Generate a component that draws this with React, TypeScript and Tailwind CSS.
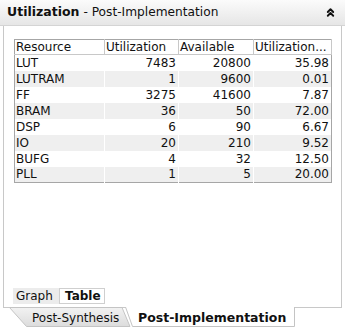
import { ChevronsUp } from 'lucide-react';

const rows = [
  { name: 'LUT', used: '7483', avail: '20800', pct: '35.98' },
  { name: 'LUTRAM', used: '1', avail: '9600', pct: '0.01' },
  { name: 'FF', used: '3275', avail: '41600', pct: '7.87' },
  { name: 'BRAM', used: '36', avail: '50', pct: '72.00' },
  { name: 'DSP', used: '6', avail: '90', pct: '6.67' },
  { name: 'IO', used: '20', avail: '210', pct: '9.52' },
  { name: 'BUFG', used: '4', avail: '32', pct: '12.50' },
  { name: 'PLL', used: '1', avail: '5', pct: '20.00' },
];

export default function App() {
  return (
    <div className="w-[345px] h-[334px] bg-white text-[12px] leading-none text-[#111] font-['DejaVu_Sans',sans-serif] flex flex-col overflow-hidden">
      {/* Header */}
      <div className="h-[26px] shrink-0 flex items-center justify-between pl-[7px] pr-[8px] bg-gradient-to-b from-[#fbfbfb] to-[#e6e6e6] border-b border-[#d4d4d4]">
        <div className="flex items-baseline gap-[4px]">
          <span className="font-bold text-[12.5px]">Utilization</span>
          <span className="text-[12.2px]">- Post-Implementation</span>
        </div>
        <ChevronsUp className="w-[13px] h-[13px]" strokeWidth={3.5} />
      </div>

      {/* Panel */}
      <div className="mx-[3px] h-[282px] shrink-0 border-x border-b border-[#c8c8c8] flex flex-col pt-[13px] pl-[10px] pb-[3px]">
        <table className="w-[317px] border border-[#a6a6a6] border-collapse table-fixed">
          <colgroup>
            <col className="w-[90px]" />
            <col className="w-[74px]" />
            <col className="w-[75px]" />
            <col className="w-[78px]" />
          </colgroup>
          <thead>
            <tr className="h-[15px]">
              {['Resource', 'Utilization', 'Available', 'Utilization...'].map((h) => (
                <th key={h} className="font-normal text-left pl-[1px] border-r border-b border-[#c8c8c8] whitespace-nowrap overflow-hidden">
                  {h}
                </th>
              ))}
            </tr>
          </thead>
          <tbody>
            {rows.map((r, i) => (
              <tr key={r.name} className={i % 2 === 1 ? 'h-[16px] bg-[#efefef]' : 'h-[16px] bg-white'}>
                <td className="pl-[1px] border-r border-white">{r.name}</td>
                <td className="text-right pr-[2px] border-r border-white">{r.used}</td>
                <td className="text-right pr-[2px] border-r border-white">{r.avail}</td>
                <td className="text-right pr-[2px]">{r.pct}</td>
              </tr>
            ))}
          </tbody>
        </table>

        <div className="flex-1" />

        <div className="flex h-[16px] ml-[-1px]">
          <div className="w-[46px] bg-[#ececec] flex items-center pl-[3px]">Graph</div>
          <div className="w-[46px] bg-white border border-[#cfcfcf] flex items-center pl-[5px] font-bold">Table</div>
        </div>
      </div>

      {/* Bottom tabs */}
      <div className="flex h-[20px] -mt-px">
        <div className="relative ml-[9px] w-[122px] h-[20px] flex items-center pl-[23px] pt-[2px]">
          <svg className="absolute inset-0" width="122" height="20" viewBox="0 0 122 20">
            <defs>
              <linearGradient id="gs" x1="0" y1="0" x2="0" y2="1">
                <stop offset="0" stopColor="#f2f2f2" />
                <stop offset="1" stopColor="#dcdcdc" />
              </linearGradient>
            </defs>
            <polygon points="0.5,0.5 17.5,19.5 121,19.5 113,0.5" fill="url(#gs)" stroke="#c4c4c4" />
          </svg>
          <span className="relative">Post-Synthesis</span>
        </div>
        <div className="relative ml-[-6px] w-[170px] h-[20px] flex items-center pl-[13px] pt-[2px] font-bold text-[12.5px]">
          <svg className="absolute inset-0" width="170" height="20" viewBox="0 0 170 20">
            <polygon points="0.5,0 7.5,19.5 169.5,19.5 169.5,0" fill="#ffffff" />
            <polyline points="0.5,0 7.5,19.5 169.5,19.5 169.5,0" fill="none" stroke="#c4c4c4" />
          </svg>
          <span className="relative">Post-Implementation</span>
        </div>
      </div>
    </div>
  );
}
